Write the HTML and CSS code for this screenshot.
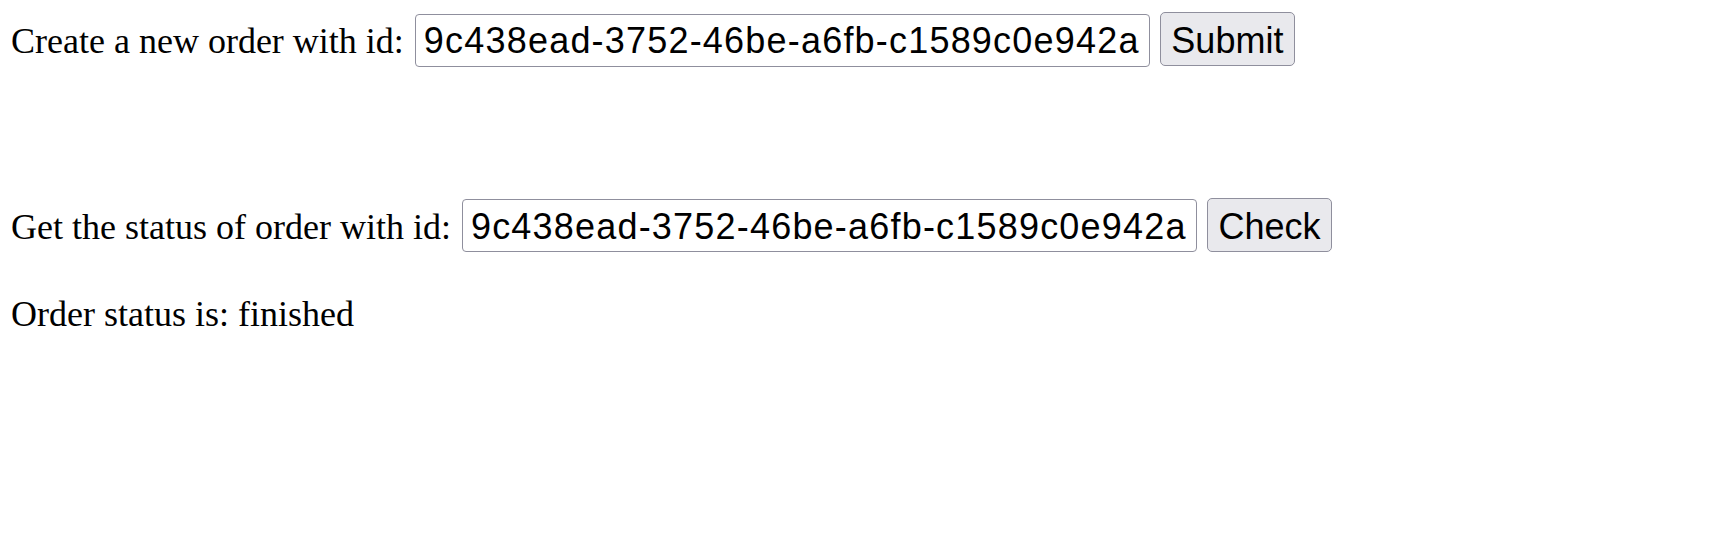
FILE: index.html
```html
<!DOCTYPE html>
<html>
<head>
<meta charset="utf-8">
<link rel="stylesheet" href="styles.css">
</head>
<body>
<div class="page">
  <form class="row row-create">
    <label class="label">Create a new order with id:</label>
    <input class="field" type="text" value="9c438ead-3752-46be-a6fb-c1589c0e942a">
    <button class="btn" type="button">Submit</button>
  </form>
  <form class="row row-check">
    <label class="label">Get the status of order with id:</label>
    <input class="field" type="text" value="9c438ead-3752-46be-a6fb-c1589c0e942a">
    <button class="btn btn-check" type="button">Check</button>
  </form>
  <p class="status">Order status is: finished</p>
</div>
</body>
</html>
```

FILE: styles.css
```css
html, body {
  margin: 0;
  padding: 0;
  background: #ffffff;
}

.page {
  padding: 12px 0 0 11px;
  font-family: "Liberation Serif", "Times New Roman", serif;
  font-size: 36px;
  color: #000000;
  display: flex;
  flex-direction: column;
  align-items: flex-start;
}

.row {
  display: flex;
  align-items: baseline;
  margin: 0;
}

.row-check {
  margin-top: 131px;
}

.label {
  font-family: "Liberation Serif", "Times New Roman", serif;
  font-size: 36px;
  line-height: normal;
}

.field {
  box-sizing: border-box;
  width: 735px;
  height: 53px;
  margin: 0 0 0 11px;
  padding: 2px 8px 0 8px;
  border: 1px solid #8f8f9d;
  border-radius: 4px;
  background: #ffffff;
  color: #000000;
  font-family: "Liberation Sans", Arial, sans-serif;
  font-size: 36px;
  letter-spacing: 1.2px;
  line-height: normal;
  outline: none;
}

.btn {
  box-sizing: border-box;
  height: 54px;
  margin: 0 0 0 10px;
  padding: 7px 10.5px 4px 10.5px;
  border: 1px solid #8f8f9d;
  border-radius: 5px;
  background: #e9e9ed;
  color: #000000;
  font-family: "Liberation Sans", Arial, sans-serif;
  font-size: 36px;
  line-height: 41px;
}

.status {
  margin: 41px 0 0 0;
  font-size: 36px;
  line-height: normal;
}
```
